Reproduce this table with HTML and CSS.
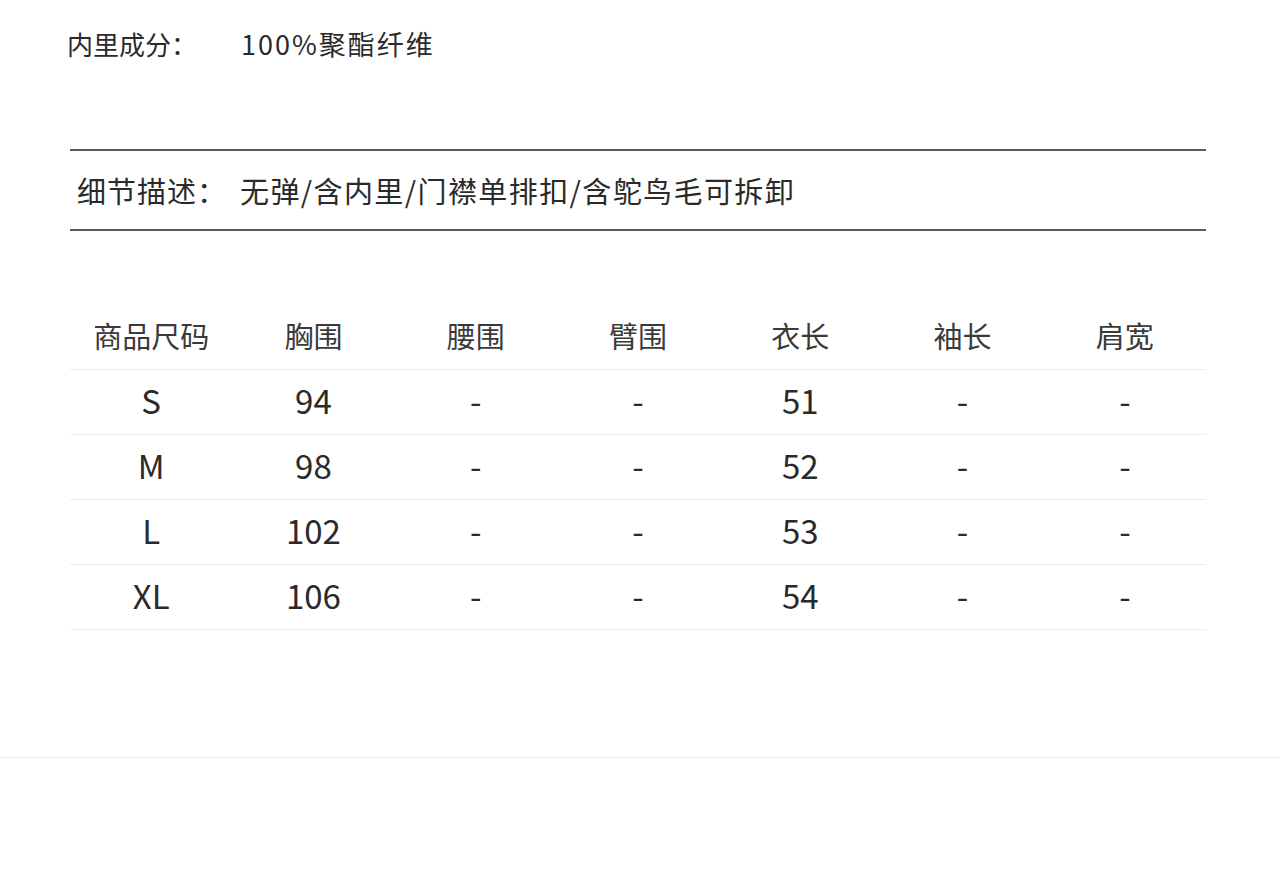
FILE: index.html
```html
<!DOCTYPE html>
<html lang="zh">
<head>
<meta charset="utf-8">
<link rel="stylesheet" href="styles.css">
</head>
<body>
<div class="page">
  <div class="spec">
    <span class="spec-label">内里成分：</span>
    <span class="spec-value">100%聚酯纤维</span>
  </div>
  <div class="detail">
    <span class="detail-label">细节描述：</span>
    <span class="detail-value">无弹/含内里/门襟单排扣/含鸵鸟毛可拆卸</span>
  </div>
  <div class="size-table">
    <div class="tr head">
      <span>商品尺码</span><span>胸围</span><span>腰围</span><span>臂围</span><span>衣长</span><span>袖长</span><span>肩宽</span>
    </div>
    <div class="tr">
      <span>S</span><span>94</span><span>-</span><span>-</span><span>51</span><span>-</span><span>-</span>
    </div>
    <div class="tr">
      <span>M</span><span>98</span><span>-</span><span>-</span><span>52</span><span>-</span><span>-</span>
    </div>
    <div class="tr">
      <span>L</span><span>102</span><span>-</span><span>-</span><span>53</span><span>-</span><span>-</span>
    </div>
    <div class="tr">
      <span>XL</span><span>106</span><span>-</span><span>-</span><span>54</span><span>-</span><span>-</span>
    </div>
  </div>
</div>
<div class="footer-rule"></div>
</body>
</html>
```
FILE: styles.css
```css
html, body {
  margin: 0;
  padding: 0;
  background: #fff;
}
body {
  font-family: "Noto Sans CJK SC", "Noto Sans", sans-serif;
  color: #2a2a2a;
  width: 1280px;
  height: 883px;
  overflow: hidden;
}
.page {
  height: 757px;
  padding-top: 24px;
  box-sizing: border-box;
}
.spec {
  display: flex;
  align-items: center;
  padding-left: 67px;
  height: 40px;
  font-size: 26px;
  line-height: 40px;
}
.spec-label {
  width: 174px;
}
.spec-value {
  font-size: 27px;
  letter-spacing: 2px;
}
.detail {
  display: flex;
  align-items: center;
  margin: 85px 74px 0 70px;
  height: 78px;
  border-top: 2px solid #5a5a5a;
  border-bottom: 2px solid #5a5a5a;
  padding-left: 7px;
  font-size: 29px;
}
.detail-label {
  width: 163px;
  letter-spacing: 1px;
}
.detail-value {
  letter-spacing: 1.4px;
}
.size-table {
  margin: 74px 74px 0 70px;
}
.tr {
  display: grid;
  grid-template-columns: repeat(7, 1fr);
  height: 60px;
  padding-bottom: 4px;
  align-items: center;
  border-bottom: 1px solid #ebebeb;
  font-size: 33px;
  text-align: center;
}
.tr.head {
  font-size: 29px;
  color: #3a3a3a;
}
.footer-rule {
  height: 1px;
  background: #ececec;
}
```
